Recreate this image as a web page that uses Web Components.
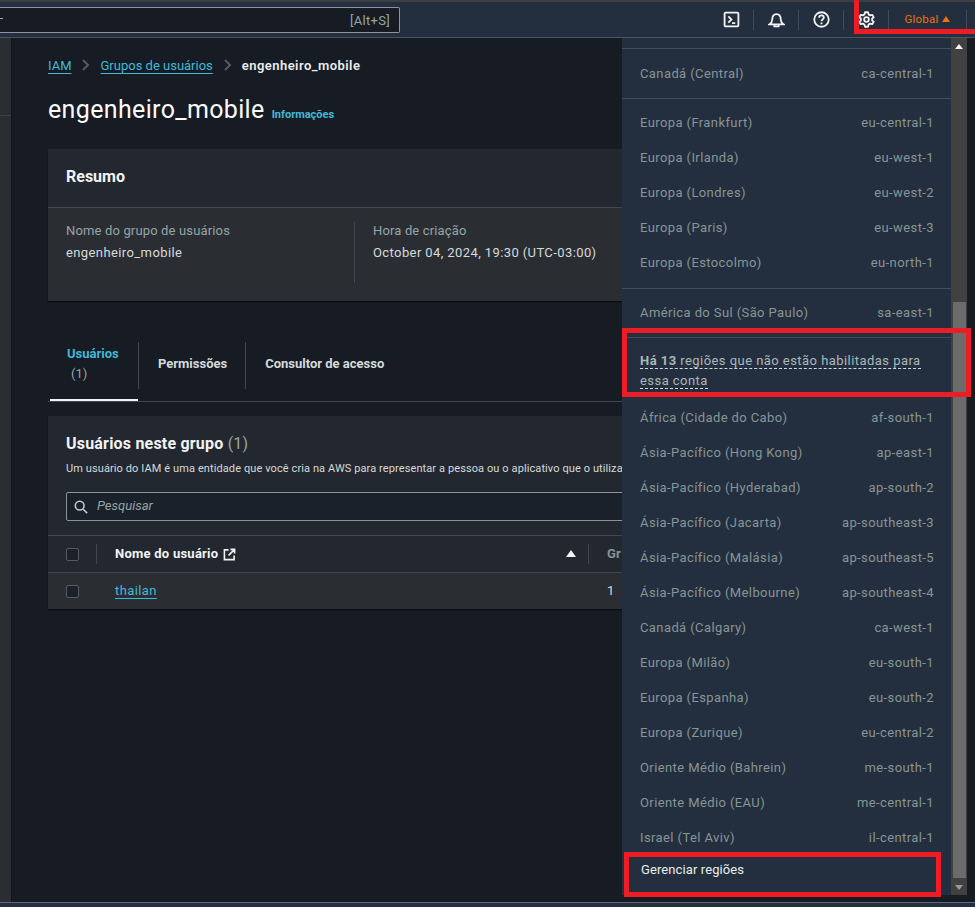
<!DOCTYPE html>
<html lang="pt-BR">
<head>
<meta charset="utf-8">
<title>engenheiro_mobile</title>
<style>
  html, body { margin: 0; height: 907px; overflow: hidden; background: #161b24; }
  body { font-family: Roboto, "Liberation Sans", sans-serif; font-size: 13px; color: #d5dbdb; }
</style>
</head>
<body>
<console-page></console-page>

<script>
const REGIONS_TOP = [
  ["Canadá (Central)", "ca-central-1"],
  null,
  ["Europa (Frankfurt)", "eu-central-1"],
  ["Europa (Irlanda)", "eu-west-1"],
  ["Europa (Londres)", "eu-west-2"],
  ["Europa (Paris)", "eu-west-3"],
  ["Europa (Estocolmo)", "eu-north-1"],
  null,
  ["América do Sul (São Paulo)", "sa-east-1"],
  null
];
const REGIONS_OFF = [
  ["África (Cidade do Cabo)", "af-south-1"],
  ["Ásia-Pacífico (Hong Kong)", "ap-east-1"],
  ["Ásia-Pacífico (Hyderabad)", "ap-south-2"],
  ["Ásia-Pacífico (Jacarta)", "ap-southeast-3"],
  ["Ásia-Pacífico (Malásia)", "ap-southeast-5"],
  ["Ásia-Pacífico (Melbourne)", "ap-southeast-4"],
  ["Canadá (Calgary)", "ca-west-1"],
  ["Europa (Milão)", "eu-south-1"],
  ["Europa (Espanha)", "eu-south-2"],
  ["Europa (Zurique)", "eu-central-2"],
  ["Oriente Médio (Bahrein)", "me-south-1"],
  ["Oriente Médio (EAU)", "me-central-1"],
  ["Israel (Tel Aviv)", "il-central-1"]
];

class TopBar extends HTMLElement {
  constructor() {
    super();
    this.attachShadow({ mode: "open" });
    this.shadowRoot.innerHTML = `
      <style>
        :host { display: flex; align-items: center; height: 35px; background: #232f3e; border-top: 2px solid #3b3f44; border-bottom: 1px solid #4a5360; }
        .search { width: 401px; height: 26px; margin: 1px 0 0 -1px; flex: none; box-sizing: border-box; background: #161b24; border: 1px solid #8c959f; border-left: none; border-radius: 0 2px 2px 0; display: flex; align-items: center; justify-content: space-between; padding-right: 9px; color: #95a5a6; font-size: 13px; letter-spacing: .3px; overflow: hidden; }
        .search i { width: 3px; height: 1px; background: #95a5a6; margin: -3px 0 0 1px; }
        .tools { margin-left: auto; display: flex; align-items: center; height: 100%; }
        .tool { width: 45px; height: 20px; flex: none; box-sizing: border-box; display: flex; align-items: center; justify-content: center; border-right: 1px solid #414d5c; }
        .tool svg { width: 17px; height: 17px; fill: none; stroke: #f2f3f3; stroke-width: 1.7; }
        .global { width: 78px; height: 20px; box-sizing: border-box; display: flex; align-items: center; justify-content: center; gap: 4px; padding-bottom: 1px; color: #ec7211; font-size: 11.5px; letter-spacing: .2px; border-right: 1px solid #414d5c; flex: none; }
        .global i { width: 0; height: 0; border: 4px solid transparent; border-top: none; border-bottom: 6px solid #ec7211; }
        .end { width: 8px; flex: none; }
      </style>
      <div class="search"><i></i><span>[Alt+S]</span></div>
      <div class="tools">
        <div class="tool"><svg viewBox="0 0 16 16"><rect x="1.500" y="1.500" width="13" height="13" rx="1"/><path d="M5 5l3 3-3 3M8.500 11.500h3"/></svg></div>
        <div class="tool"><svg viewBox="0 0 16 16"><path d="M1.500 12.500c1.700-1.200 2.400-2.300 2.500-4.500.1-3 1.600-5 4-5s3.900 2 4 5c.1 2.200.8 3.300 2.500 4.500z"/><path d="M6 13v1.500h4V13"/></svg></div>
        <div class="tool"><svg viewBox="0 0 16 16"><circle cx="8" cy="8" r="6.800"/><path d="M5.800 6.300c0-1.300 1-2.100 2.200-2.100s2.200.8 2.200 2c0 1.800-2.200 1.700-2.200 3.400M8 10.800v1.600"/></svg></div>
        <div class="tool"><svg viewBox="0 0 16 16"><circle cx="8" cy="8" r="2.200"/><path d="M6.600 1.200H9.400L9.900 3.200 11.500 4.100 13.400 3.600 14.800 6 13.300 7.100V8.900L14.800 10 13.400 12.400 11.500 11.900 9.900 12.800 9.400 14.800H6.600L6.100 12.800 4.500 11.900 2.600 12.400 1.200 10 2.700 8.900V7.100L1.200 6 2.600 3.600 4.500 4.100 6.100 3.200Z" stroke-linejoin="round"/></svg></div>
        <div class="global">Global <i></i></div>
        <div class="end"></div>
      </div>`;
  }
}

class RegionRow extends HTMLElement {
  constructor() {
    super();
    this.attachShadow({ mode: "open" });
    this.shadowRoot.innerHTML = `
      <style>
        :host { display: flex; justify-content: space-between; align-items: center; height: 35px; padding: 0 17px 0 18px; color: #879596; font-size: 13px; letter-spacing: .4px; }
      </style>
      <span>${this.getAttribute("name")}</span><span>${this.getAttribute("code")}</span>`;
  }
}

class RegionMenu extends HTMLElement {
  constructor() {
    super();
    this.attachShadow({ mode: "open" });
    const row = (r) => `<region-row name="${r[0]}" code="${r[1]}"></region-row>`;
    const top = REGIONS_TOP.map((r) => r ? row(r) : `<div class="sep"></div>`).join("");
    this.shadowRoot.innerHTML = `
      <style>
        :host { display: flex; position: absolute; left: 622px; top: 38px; width: 345px; height: 857px; background: #232f3e; overflow: hidden; }
        .list { flex: 1; min-width: 0; padding-top: 10px; }
        .rule { height: 1px; background: #414d5c; }
        .sep { height: 1px; background: #414d5c; margin: 7px 0 6px; }
        .sep:nth-of-type(2) { margin-top: 8px; }
        .rows { padding-top: 7px; }
        .rows .sep:last-child { margin-bottom: 0; }
        .note { padding: 13px 18px 9px; font-size: 13px; line-height: 20px; color: #aab7b8; letter-spacing: .45px; }
        .note span { border-bottom: 1px dashed #d5dbdb; }
        .note b { font-weight: 700; }
        .manage { padding: 7px 19px; color: #eaeded; font-size: 13px; line-height: 15px; letter-spacing: .1px; }
        .bar { width: 16px; flex: none; background: #414141; position: relative; }
        .thumb { position: absolute; left: 2px; right: 1px; top: 264px; height: 576px; background: #6b6b6b; }
        .up, .down { position: absolute; left: 4px; width: 0; height: 0; border: 4px solid transparent; }
        .up { top: 6px; border-top: none; border-bottom: 5px solid #f2f3f3; }
        .down { bottom: 5px; border-bottom: none; border-top: 5px solid #9a9a9a; }
      </style>
      <div class="list">
        <div class="rule"></div>
        <div class="rows">${top}</div>
        <div class="note"><span><b>Há 13</b> regiões que não estão habilitadas para</span><br><span>essa conta</span></div>
        <div>${REGIONS_OFF.map(row).join("")}</div>
        <div class="manage">Gerenciar regiões</div>
      </div>
      <div class="bar"><i class="up"></i><div class="thumb"></div><i class="down"></i></div>`;
  }
}

class BreadCrumbs extends HTMLElement {
  constructor() {
    super();
    this.attachShadow({ mode: "open" });
    this.shadowRoot.innerHTML = `
      <style>
        :host { display: flex; align-items: center; gap: 9px; height: 18px; font-size: 13px; }
        a { color: #44b9d6; text-decoration: underline; text-underline-offset: 3px; }
        b { color: #eaeded; font-weight: 600; letter-spacing: .45px; }
        svg { width: 12px; height: 12px; margin-right: -1px; fill: none; stroke: #545b64; stroke-width: 2; }
      </style>
      <a>IAM</a>
      <svg viewBox="0 0 12 12"><path d="M3 1l5 5-5 5"/></svg>
      <a>Grupos de usuários</a>
      <svg viewBox="0 0 12 12"><path d="M3 1l5 5-5 5"/></svg>
      <b>engenheiro_mobile</b>`;
  }
}

class SummaryCard extends HTMLElement {
  constructor() {
    super();
    this.attachShadow({ mode: "open" });
    this.shadowRoot.innerHTML = `
      <style>
        :host { display: block; background: #2a2e33; box-shadow: 0 1px 1px #0a0d11; }
        h2 { margin: 0; height: 59px; box-sizing: border-box; display: flex; align-items: center; padding: 0 18px 4px; font-size: 16px; font-weight: 700; color: #f2f3f3; background: #232830; border-bottom: 1px solid #414750; }
        .body { display: grid; grid-template-columns: 306px 1fr; padding-top: 14px; height: 93px; box-sizing: border-box; }
        .col { padding-left: 18px; height: 61px; }
        .col + .col { border-left: 1px solid #414750; }
        .label { color: #95a5a6; font-size: 13px; line-height: 18px; letter-spacing: .15px; }
        .value { color: #d5dbdb; font-size: 13px; line-height: 18px; margin-top: 4px; letter-spacing: .4px; }
      </style>
      <h2>Resumo</h2>
      <div class="body">
        <div class="col"><div class="label">Nome do grupo de usuários</div><div class="value">engenheiro_mobile</div></div>
        <div class="col"><div class="label">Hora de criação</div><div class="value">October 04, 2024, 19:30 (UTC-03:00)</div></div>
      </div>`;
  }
}

class TabBar extends HTMLElement {
  constructor() {
    super();
    this.attachShadow({ mode: "open" });
    this.shadowRoot.innerHTML = `
      <style>
        :host { display: flex; align-items: flex-start; height: 60px; border-bottom: 1px solid #414750; position: relative; font-size: 13px; font-weight: 700; color: #d5dbdb; }
        .tab { height: 47px; box-sizing: border-box; margin-top: 1px; display: flex; align-items: center; padding: 0 18px 4px 19px; border-right: 1px solid #414750; flex: none; }
        .first { width: 91px; padding: 2px 0 0 19px; display: block; line-height: 20px; }
        .last { border-right: none; }
        .on { display: block; color: #44b9d6; }
        .count { display: block; font-weight: 400; color: #95a5a6; padding-left: 4px; }
        .line { position: absolute; left: 2px; bottom: 0; width: 88px; height: 2px; background: #f2f3f3; }
      </style>
      <div class="tab first"><span class="on">Usuários</span><span class="count">(1)</span></div>
      <div class="tab">Permissões</div>
      <div class="tab last">Consultor de acesso</div>
      <div class="line"></div>`;
  }
}

class UsersCard extends HTMLElement {
  constructor() {
    super();
    this.attachShadow({ mode: "open" });
    this.shadowRoot.innerHTML = `
      <style>
        :host { display: block; background: #232830; box-shadow: 0 1px 1px #0a0d11; }
        header { height: 120px; box-sizing: border-box; padding: 18px 18px 0; border-bottom: 1px solid #414750; }
        h2 { margin: 0; font-size: 16px; line-height: 20px; font-weight: 700; color: #f2f3f3; letter-spacing: .2px; }
        h2 span { font-weight: 400; color: #95a5a6; }
        p { margin: 7px 0 0; font-size: 11px; line-height: 16px; color: #d5dbdb; white-space: nowrap; letter-spacing: .1px; }
        .search { margin-top: 15px; height: 29px; box-sizing: border-box; display: flex; align-items: center; gap: 9px; padding: 0 0 2px 7px; background: #1a212a; border: 1px solid #879596; border-radius: 2px; color: #95a5a6; font-style: italic; font-size: 13px; }
        .search svg { width: 14px; height: 14px; margin-top: 2px; fill: none; stroke: #c6cccc; stroke-width: 1.800; }
        .row { display: flex; align-items: center; }
        .head { height: 37px; box-sizing: border-box; font-weight: 700; color: #f2f3f3; border-bottom: 1px solid #414750; letter-spacing: .25px; }
        .data { height: 36px; background: #2a2e33; color: #d5dbdb; }
        .check { width: 13px; height: 13px; margin-left: 18px; flex: none; box-sizing: border-box; border: 1px solid #545b64; border-radius: 2px; background: #1a212a; }
        .sel { width: 49px; flex: none; display: flex; align-items: center; }
        .div { width: 1px; height: 20px; background: #414750; margin-left: 17px; flex: none; }
        .name { width: 491px; flex: none; padding: 0 0 2px 18px; display: flex; align-items: center; gap: 5px; box-sizing: border-box; position: relative; }
        .name svg { width: 13px; height: 13px; margin-top: 2px; fill: none; stroke: #f2f3f3; stroke-width: 1.700; }
        .sort { position: absolute; right: 12px; width: 0; height: 0; border: 5px solid transparent; border-top: none; border-bottom: 7px solid #f2f3f3; }
        .gr { padding: 0 0 2px 18px; color: #879596; }
        a { color: #44b9d6; text-decoration: underline; text-underline-offset: 3px; font-size: 13px; letter-spacing: .4px; }
        .cnt { padding: 0 0 2px 19px; }
      </style>
      <header>
        <h2>Usuários neste grupo <span>(1)</span></h2>
        <p>Um usuário do IAM é uma entidade que você cria na AWS para representar a pessoa ou o aplicativo que o utiliza</p>
        <div class="search"><svg viewBox="0 0 16 16"><circle cx="6.500" cy="6.500" r="5"/><path d="M10.500 10.500l4.500 4.500"/></svg>Pesquisar</div>
      </header>
      <div class="row head">
        <div class="sel"><span class="check"></span><span class="div"></span></div>
        <div class="name">Nome do usuário
          <svg viewBox="0 0 14 14"><path d="M6 2H1.500v10.500H12V8M8 1.500h4.500V6M12.500 1.500L6 8"/></svg>
          <i class="sort"></i></div>
        <span class="div" style="margin-left:0"></span>
        <div class="gr">Gr</div>
      </div>
      <div class="row data">
        <div class="sel"><span class="check"></span></div>
        <div class="name"><a>thailan</a></div>
        <div class="cnt">1</div>
      </div>`;
  }
}

class ConsolePage extends HTMLElement {
  constructor() {
    super();
    this.attachShadow({ mode: "open" });
    this.shadowRoot.innerHTML = `
      <style>
        :host { display: grid; grid-template-rows: auto 1fr 5px; height: 907px; position: relative; overflow: hidden; }
        .layout { display: flex; min-height: 0; overflow: hidden; background: #161b24; }
        .side { width: 12px; flex: none; background: #2a2e33; border-right: 1px solid #12161c; box-sizing: border-box; }
        .side div { height: 77px; border-bottom: 1px solid #3a3f45; }
        main { width: 950px; flex: none; padding: 18px 0 0 36px; box-sizing: border-box; }
        .title { display: flex; align-items: baseline; gap: 7px; margin: 18px 0 21px; height: 36px; }
        h1 { margin: 0; font-size: 25px; letter-spacing: .35px; font-weight: 400; color: #fafafa; line-height: 36px; }
        .info { color: #44b9d6; font-size: 11px; font-weight: 700; }
        tab-bar { margin: 40px 0 14px; }
        .foot { background: #232f3e; border-top: 1px solid #5f6b7a; }
        .mark { position: absolute; border: 5px solid #ee1c25; box-sizing: border-box; pointer-events: none; }
      </style>
      <top-bar></top-bar>
      <div class="layout">
        <div class="side"><div></div></div>
        <main>
          <bread-crumbs></bread-crumbs>
          <div class="title"><h1>engenheiro_mobile</h1><span class="info">Informações</span></div>
          <summary-card></summary-card>
          <tab-bar></tab-bar>
          <users-card></users-card>
        </main>
      </div>
      <div class="foot"></div>
      <region-menu></region-menu>
      <div class="mark" style="left:854px;top:-6px;width:130px;height:40px"></div>
      <div class="mark" style="left:622px;top:328px;width:349px;height:69px"></div>
      <div class="mark" style="left:624px;top:852px;width:317px;height:45px"></div>`;
  }
}

customElements.define("top-bar", TopBar);
customElements.define("region-row", RegionRow);
customElements.define("region-menu", RegionMenu);
customElements.define("bread-crumbs", BreadCrumbs);
customElements.define("summary-card", SummaryCard);
customElements.define("tab-bar", TabBar);
customElements.define("users-card", UsersCard);
customElements.define("console-page", ConsolePage);
</script>
</body>
</html>
